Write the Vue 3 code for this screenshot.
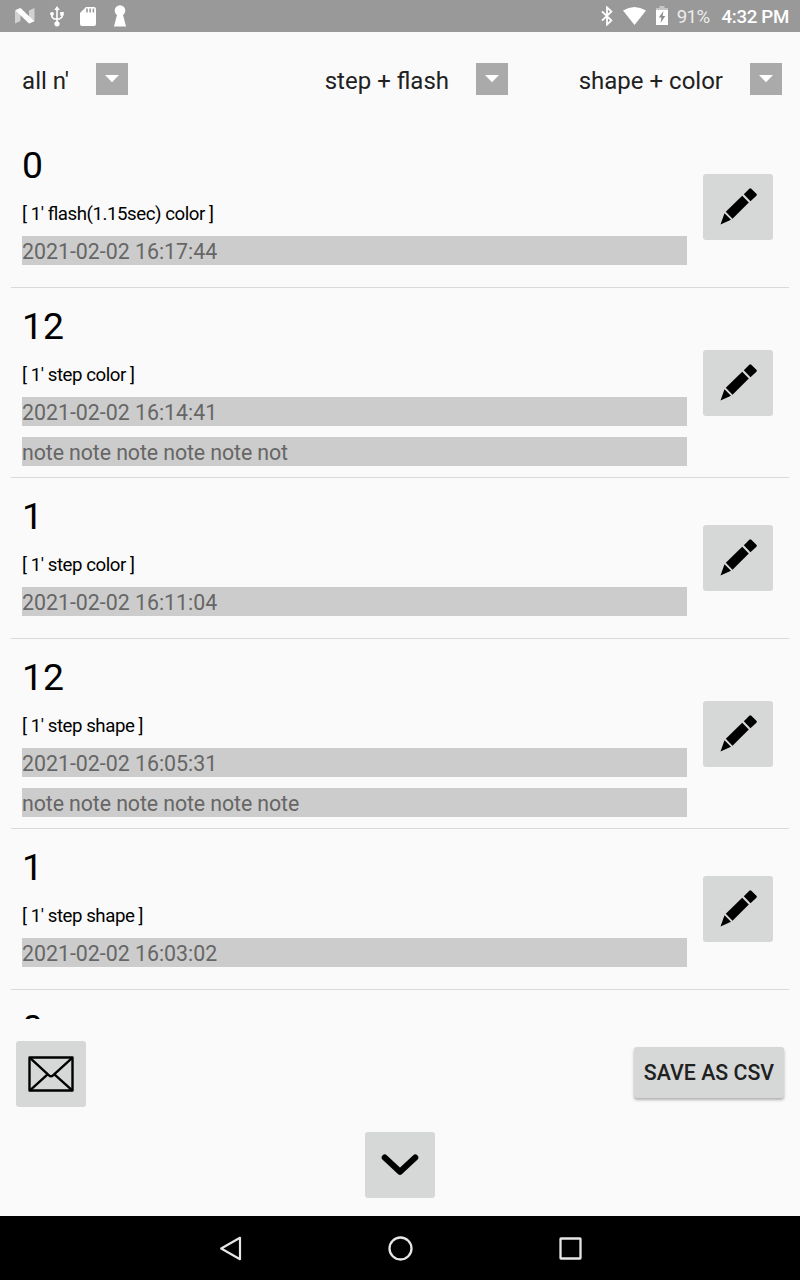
<template>
  <div class="screen">
    <header class="status-bar">
      <div class="status-left">
        <svg class="ico-n" width="20" height="16" viewBox="0 0 20 16">
          <path d="M0 2.500L5.500 0v13L0 15.500z M14 2.500L19.500 0v13L14 15.500z" fill="#d2d2d2" />
          <path d="M0.300 2.300L5.500 0L19.300 13.200L14 15.500z" fill="#fff" />
        </svg>
        <svg class="ico-usb" width="14" height="21" viewBox="0 0 14 21">
          <g fill="none" stroke="#fff" stroke-width="1.600">
            <path d="M7 3v14M2 8.500v2.500l2 2h5.500l2.500-2V8" />
          </g>
          <path d="M7 0L9.800 4H4.200z" fill="#fff" />
          <circle cx="7" cy="17.800" r="2.600" fill="#fff" />
          <circle cx="2" cy="7.800" r="1.900" fill="#fff" />
          <rect x="10.200" y="6" width="3.600" height="3.600" fill="#fff" />
        </svg>
        <svg class="ico-sd" width="16" height="19" viewBox="0 0 16 19">
          <path d="M6 0h8a2 2 0 0 1 2 2v15a2 2 0 0 1-2 2H2a2 2 0 0 1-2-2V6z" fill="#fff" />
          <path d="M7 1.500v4M10.200 1.500v4M13.400 1.500v4" stroke="#999" stroke-width="1.600" />
        </svg>
        <svg class="ico-key" width="12" height="22" viewBox="0 0 12 22">
          <circle cx="6" cy="5.500" r="5.300" fill="#fff" />
          <path d="M3.500 8h5L12 21.500H0z" fill="#fff" />
        </svg>
      </div>
      <div class="status-right">
        <svg class="ico-bt" width="12" height="20" viewBox="0 0 12 20">
          <path d="M1 5.300l9.400 9.200L6 18.600V1.400l4.400 4.100L1 14.700" fill="none" stroke="#fff" stroke-width="1.800" />
        </svg>
        <svg class="ico-wifi" width="23" height="18" viewBox="0 0 23 18">
          <path d="M0 3.600Q11.500-3.600 23 3.600L11.500 18z" fill="#fff" />
        </svg>
        <svg class="ico-battery" width="12" height="19" viewBox="0 0 12 19">
          <path d="M3.500 0h5v2h3.500v4H0V2h3.500z" fill="#c6c6c6" />
          <path d="M0 4h12v15H0z" fill="#fff" />
          <path d="M7.500 5L2.800 11.500h2.700L4.500 17l4.800-7H6.600z" fill="#8c8c8c" />
        </svg>
        <span class="percent">91%</span>
        <span class="clock">4:32 PM</span>
      </div>
    </header>

    <nav class="filters">
      <div v-for="f in filters" :key="f" class="filter">
        <span class="filter-label">{{ f }}</span>
        <button class="filter-arrow" :aria-label="f">
          <svg width="14" height="8" viewBox="0 0 14 8"><path d="M0 0h14L7 7.300z" fill="#fff" /></svg>
        </button>
      </div>
    </nav>

    <main class="list">
      <section v-for="(r, i) in records" :key="i" class="record">
        <div class="record-body">
          <div class="score">{{ r.score }}</div>
          <div class="mode">{{ r.mode }}</div>
          <div class="field">{{ r.date }}</div>
          <div v-if="r.note" class="field note">{{ r.note }}</div>
        </div>
        <button class="icon-btn" aria-label="edit">
          <svg width="70" height="66" viewBox="0 0 70 66">
            <path d="M17.500 50.500L21.500 39.300L28 45.800z M22.800 37.800L39.200 21.700L45.800 28.500L29.500 44.800z" />
            <path d="M40.800 20.300L46.300 14.800Q47.300 13.800 48.300 14.800L53.400 19.800Q54.400 20.800 53.400 21.800L47.500 27.300z" />
          </svg>
        </button>
      </section>
    </main>

    <footer class="actions">
      <div class="actions-row">
        <button class="icon-btn" aria-label="mail">
          <svg width="70" height="66" viewBox="0 0 70 66">
            <g fill="none" stroke="#000" stroke-width="2.400" stroke-linejoin="round">
              <rect x="13.500" y="16.500" width="43" height="33" />
              <path d="M13.700 16.700L33 34.300Q35 36.200 37 34.300L56.500 16.700M13.700 49.700L31.600 33.300M56.500 49.700L38.400 33.300" />
            </g>
          </svg>
        </button>
        <button class="save-btn">SAVE AS CSV</button>
      </div>
      <button class="icon-btn" aria-label="more">
        <svg width="70" height="66" viewBox="0 0 70 66">
          <path d="M19.700 25.500L35 39.800L50.300 25.500" fill="none" stroke="#000" stroke-width="6" stroke-linecap="round" stroke-linejoin="round" />
        </svg>
      </button>
    </footer>

    <div class="nav-bar">
      <svg width="26" height="28" viewBox="0 0 26 28">
        <path d="M4.200 14.500L23 3.800v21.400z" fill="none" stroke="#e6e6e6" stroke-width="2.200" stroke-linejoin="round" />
      </svg>
      <svg width="26" height="28" viewBox="0 0 26 28">
        <circle cx="13.500" cy="14.500" r="11" fill="none" stroke="#e6e6e6" stroke-width="2.300" />
      </svg>
      <svg width="26" height="28" viewBox="0 0 26 28">
        <rect x="3.500" y="4.500" width="20" height="20" rx="0.500" fill="none" stroke="#e6e6e6" stroke-width="2.300" />
      </svg>
    </div>
  </div>
</template>

<script setup>
import { ref } from 'vue';

const filters = ref(["all n'", 'step + flash', 'shape + color']);

const records = ref([
  { score: 0, mode: "[ 1' flash(1.15sec) color ]", date: '2021-02-02 16:17:44' },
  { score: 12, mode: "[ 1' step color ]", date: '2021-02-02 16:14:41', note: 'note note note note note not' },
  { score: 1, mode: "[ 1' step color ]", date: '2021-02-02 16:11:04' },
  { score: 12, mode: "[ 1' step shape ]", date: '2021-02-02 16:05:31', note: 'note note note note note note' },
  { score: 1, mode: "[ 1' step shape ]", date: '2021-02-02 16:03:02' },
  // only the top of this one shows above the footer
  { score: 0, mode: '', date: '' },
]);
</script>

<style>
body {
  margin: 0;
  background: #fafafa;
}
</style>

<style scoped>
.screen {
  width: 800px;
  height: 1280px;
  display: flex;
  flex-direction: column;
  overflow: hidden;
  background: #fafafa;
  color: #000;
  font-family: Roboto, sans-serif;
}

svg {
  display: block;
  flex: none;
}

button {
  border: none;
  padding: 0;
  font-family: inherit;
}

/* status bar */
.status-bar {
  flex: none;
  height: 32px;
  display: flex;
  justify-content: space-between;
  padding: 0 11px 0 15px;
  box-sizing: border-box;
  background: #999;
  color: #fff;
}

.status-left,
.status-right {
  display: flex;
  align-items: center;
}

.ico-usb { margin-left: 15px; }
.ico-sd { margin-left: 16px; }
.ico-key { margin-left: 18px; }
.ico-wifi { margin-left: 10px; }
.ico-battery { margin: 0 9px 2px 10px; }

.percent {
  padding-top: 1px;
  font-size: 18.67px;
  letter-spacing: -0.6px;
  color: #ececec;
}

.clock {
  padding-top: 1px;
  margin-left: 12px;
  font-size: 18.67px;
  font-weight: 500;
  letter-spacing: -0.3px;
}

/* filters */
.filters {
  flex: none;
  height: 94px;
  margin-bottom: 1px;
  display: grid;
  grid-template-columns: 128px 380px 274px;
}

.filter {
  display: flex;
  align-items: center;
  justify-content: flex-end;
  gap: 27px;
}

.filter-label {
  font-size: 24px;
  line-height: 32px;
  padding-top: 3px;
  color: #212121;
}

.filter-arrow {
  width: 32px;
  height: 32px;
  display: flex;
  align-items: center;
  justify-content: center;
  background: #aaa;
}

/* records */
.list {
  flex: none;
  height: 892px;
  padding: 0 11px;
  overflow: hidden;
}

.record {
  display: flex;
  align-items: center;
  gap: 16px;
  padding: 0 16px 0 11px;
  border-bottom: 1px solid #dadada;
}

.record-body {
  flex: 1;
  padding: 16px 0 22px;
}

.record-body:has(.note) {
  padding-bottom: 11px;
}

.score {
  height: 44px;
  line-height: 44px;
  font-size: 37.33px;
}

.mode {
  margin: 16px 0 11px;
  height: 22px;
  line-height: 22px;
  font-size: 18.67px;
  letter-spacing: -0.45px;
  font-feature-settings: 'liga' 1;
}

.field {
  height: 29px;
  line-height: 31px;
  font-size: 21.33px;
  background: #ccc;
  color: #666;
}

.note {
  margin-top: 11px;
  letter-spacing: -0.09px;
}

.icon-btn {
  flex: none;
  width: 70px;
  height: 66px;
  border-radius: 3px;
  background: #d6d8d7;
}

/* bottom actions */
.actions {
  flex: none;
  height: 197px;
  padding: 22px 16px 0;
  box-sizing: border-box;
  display: flex;
  flex-direction: column;
  align-items: center;
  gap: 25px;
}

.actions-row {
  align-self: stretch;
  display: flex;
  align-items: center;
  justify-content: space-between;
}

.save-btn {
  width: 150px;
  height: 51px;
  margin-bottom: 3px;
  border-radius: 3px;
  background: #d6d8d7;
  box-shadow: 0 2px 3px rgba(0, 0, 0, 0.3);
  font-size: 21.33px;
  font-weight: 500;
  color: #212121;
  white-space: nowrap;
}

.nav-bar {
  flex: 1;
  display: flex;
  align-items: center;
  justify-content: center;
  gap: 144px;
  background: #000;
}
</style>
